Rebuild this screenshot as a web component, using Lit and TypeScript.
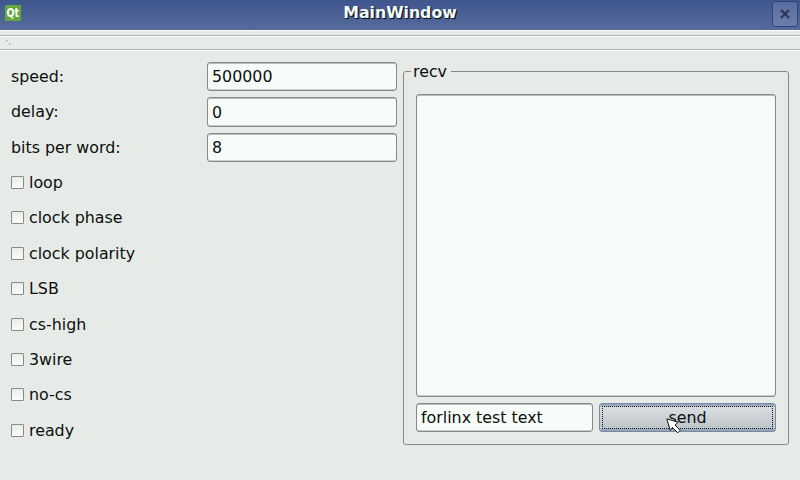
import { LitElement, html, css } from "lit";
import { customElement } from "lit/decorators.js";

@customElement("title-bar")
class TitleBar extends LitElement {
  static styles = css`
    :host { display: grid; grid-template-columns: 28px 1fr 28px; height: 30px; box-sizing: border-box;
      background: linear-gradient(#3f568d, #566b9c); }
    .logo { display: block; margin: 5px 0 0 5px; overflow: visible; }
    .logo text { font: bold 13px "DejaVu Sans Condensed", "DejaVu Sans", sans-serif; }
    .title { text-align: center; color: #f7fcf8; font-weight: bold; font-size: 15.75px; line-height: 26px;
      text-shadow: 1px 1px 0 #101828, 1px 1px 1px #101828; }
    .close { box-sizing: border-box; width: 26px; height: 26px; margin-top: 1px; border: 1px solid #30447a;
      border-radius: 3px; background: linear-gradient(#5b6c9f, #6d7dab); display: flex;
      align-items: center; justify-content: center; }
  `;
  render() {
    return html`
      <svg class="logo" width="16" height="16" viewBox="0 0 16 16">
        <path d="M1 0H16V15L15 16H0V1Z" fill="#62a83f" />
        <text x="1.5" y="12" fill="#fff" textLength="12.6" lengthAdjust="spacingAndGlyphs">Qt</text>
      </svg>
      <div class="title">MainWindow</div>
      <div class="close">
        <svg width="10" height="10" viewBox="0 0 10 10">
          <path d="M1 1L9 9M9 1L1 9" stroke="#2b3654" stroke-width="2.1" />
        </svg>
      </div>
    `;
  }
}

@customElement("app-root")
class AppRoot extends LitElement {
  static styles = css`
    :host { display: flex; flex-direction: column; position: relative; width: 800px; height: 480px;
      overflow: hidden; background: #e6ebe7; color: #0c0f0d; font: 15.85px/19px "DejaVu Sans", sans-serif; }
    * { box-sizing: border-box; }
    .toolbar { height: 21px; border-top: 1px solid #fff; display: flex; flex-direction: column; padding-top: 4px; }
    .strip { height: 16px; border-top: 1px solid #b0b4b1; border-bottom: 1px solid #fbfdfb;
      box-shadow: inset 0 1px #fbfdfb, inset 0 -1px #b0b4b1; padding: 4px 0 0 6px; }
    .strip svg { display: block; }
    .body { display: flex; padding: 11px 11px 0 11px; gap: 6px; }
    .form { width: 386px; display: grid; align-content: start;
      grid-template-rows: 35px 36px 35px 35px 36px 35px 36px 35px 35px 36px 35px; }
    .row { display: grid; grid-template-columns: 196px 190px; padding-bottom: 6px; }
    .row span { align-self: start; padding-top: 5px; }
    .field { border: 1px solid #868b87; border-radius: 3px; background: #f7fcf8; color: inherit; font: inherit;
      padding: 0 4px; margin: 0; outline: none; min-width: 0; height: 100%;
      box-shadow: inset 0 1px #b9beba, inset 0 -1px #c8cdc9; display: block; }
    .check { display: flex; align-items: flex-start; gap: 5px; padding-top: 5px; }
    .box { width: 13px; height: 13px; margin-top: 3px; border: 1px solid #868b87; border-radius: 1px;
      background: linear-gradient(#e9edea, #fafdfb); }
    .group { width: 386px; height: 383px; margin: 0; padding: 13px 12px 12px; border: 1px solid #868b87;
      border-radius: 3px; min-width: 0; }
    .group legend { padding: 0 4px 0 2px; margin-left: -5px; height: 19px; }
    .recv { display: block; width: 360px; height: 303px; resize: none; }
    .actions { display: grid; grid-template-columns: 177px 177px; gap: 6px; height: 29px; margin-top: 6px; }
    .send { border: 1px solid #7b8b9b; border-radius: 3px; padding: 2px; margin: 0; font: inherit; color: inherit;
      background: linear-gradient(#8ea4b9 0 1px, #d9dee1 3px, #bfc5ca 24px, #8ea4b9 26px); }
    .focus { display: block; border: 1px dotted #10151a; height: 23px; line-height: 22px; }
    .cursor { position: absolute; left: 666px; top: 418px; }
  `;

  fields = [["speed:", "500000"], ["delay:", "0"], ["bits per word:", "8"]];
  options = ["loop", "clock phase", "clock polarity", "LSB", "cs-high", "3wire", "no-cs", "ready"];

  render() {
    return html`
      <title-bar></title-bar>
      <div class="toolbar"><div class="strip">
        <svg width="6" height="6" viewBox="0 0 6 6">
          <path d="M0 0h2v2h-2zM3 3h2v2h-2z" fill="#b4b8b5" />
          <path d="M1 1h1v1h-1zM4 4h1v1h-1z" fill="#fff" />
        </svg>
      </div></div>
      <div class="body">
        <div class="form">
          ${this.fields.map(([name, value]) => html`
            <label class="row"><span>${name}</span><input class="field" .value=${value} /></label>`)}
          ${this.options.map((name) => html`
            <div class="check"><span class="box"></span><span>${name}</span></div>`)}
        </div>
        <fieldset class="group">
          <legend>recv</legend>
          <textarea class="field recv"></textarea>
          <div class="actions">
            <input class="field" .value=${"forlinx test text"} />
            <button class="send"><span class="focus">send</span></button>
          </div>
        </fieldset>
      </div>
      <svg class="cursor" width="15" height="16" viewBox="0 0 15 16">
        <path d="M.8 .8L12.2 4.2L9 7L14.2 12.3L11.7 14.9L6.5 9.5L4.2 12.3Z" fill="#fff" stroke="#111" stroke-width="1" />
      </svg>
    `;
  }
}
